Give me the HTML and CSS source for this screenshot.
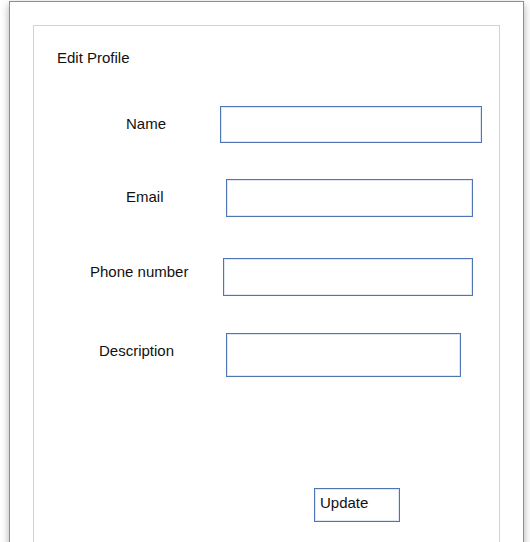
FILE: index.html
```html
<!DOCTYPE html>
<html>
<head>
<meta charset="utf-8">
<link rel="stylesheet" href="styles.css">
</head>
<body>
<div class="frame">
  <div class="panel">
    <div class="title">Edit Profile</div>
    <div class="row row-name">
      <label class="label">Name</label>
      <div class="field"></div>
    </div>
    <div class="row row-email">
      <label class="label">Email</label>
      <div class="field"></div>
    </div>
    <div class="row row-phone">
      <label class="label">Phone number</label>
      <div class="field"></div>
    </div>
    <div class="row row-desc">
      <label class="label">Description</label>
      <div class="field"></div>
    </div>
    <div class="actions">
      <div class="button">Update</div>
    </div>
  </div>
</div>
</body>
</html>
```

FILE: styles.css
```css
html, body {
  margin: 0;
  padding: 0;
  background: #ffffff;
  overflow: hidden;
  height: 542px;
}
body {
  font-family: "Liberation Sans", Arial, sans-serif;
  font-size: 15px;
  line-height: 17px;
  color: #111111;
}
.frame {
  box-sizing: border-box;
  margin: 1px 0 0 9px;
  width: 515px;
  height: 560px;
  border: 1px solid #8e8e8e;
  background: #ffffff;
  box-shadow: 0 3px 8px rgba(0, 0, 0, 0.32);
  padding: 23px 0 0 23px;
}
.panel {
  box-sizing: border-box;
  width: 467px;
  height: 530px;
  border: 1px solid #d2d2d2;
  padding-top: 23px;
}
.title {
  padding-left: 23px;
  height: 17px;
}
.row {
  display: flex;
  align-items: flex-start;
}
.label {
  box-sizing: border-box;
  margin-top: 9px;
  white-space: nowrap;
}
.field {
  box-sizing: border-box;
  border: 1px solid #4f75b4;
  box-shadow: inset 0 0 0 1px rgba(130, 160, 210, 0.25);
}
.row-name { margin-top: 40px; }
.row-name .label { width: 186px; padding-left: 92px; }
.row-name .field { width: 262px; height: 37px; }

.row-email { margin-top: 36px; }
.row-email .label { width: 192px; padding-left: 92px; }
.row-email .field { width: 247px; height: 38px; }

.row-phone { margin-top: 41px; }
.row-phone .label { width: 189px; padding-left: 56px; margin-top: 5px; }
.row-phone .field { width: 250px; height: 38px; }

.row-desc { margin-top: 37px; }
.row-desc .label { width: 192px; padding-left: 65px; }
.row-desc .field { width: 235px; height: 44px; }

.actions {
  margin-top: 111px;
  padding-left: 280px;
}
.button {
  box-sizing: border-box;
  width: 86px;
  height: 34px;
  border: 1px solid #4f75b4;
  box-shadow: inset 0 0 0 1px rgba(130, 160, 210, 0.25);
  padding: 5px 0 0 5px;
}
```
